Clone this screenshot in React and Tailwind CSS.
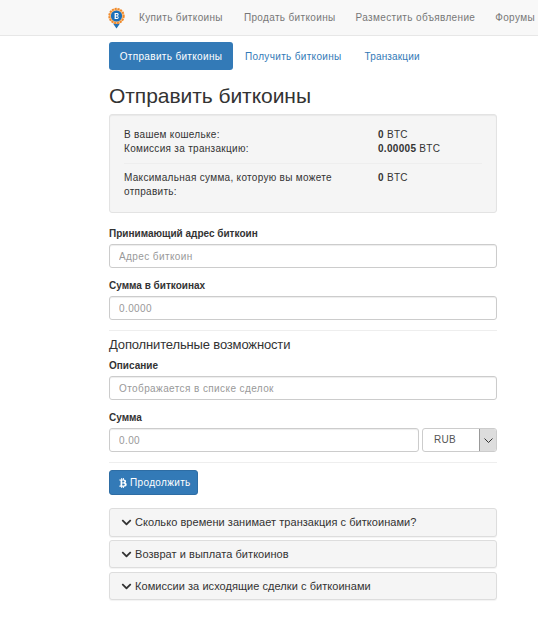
import React from 'react';
import { FaChevronDown, FaBtc } from 'react-icons/fa';

const Logo = () => (
    <svg width="17" height="23" viewBox="0 0 17 23" className="mt-[1px]">
        <path d="M5 16.5 L12 16.5 L8.5 21.5 Z" fill="#1f6fb5" />
        <circle cx="8.5" cy="9" r="7.6" fill="#f9c48c" />
        <circle cx="8.5" cy="9" r="7.2" fill="none" stroke="#ef8a2c" strokeWidth="2" strokeDasharray="2 0.9" />
        <circle cx="8.5" cy="9" r="5.6" fill="#1a6fb8" />
        <path d="M6.6 6 h2.5 a1.5 1.5 0 0 1 .6 2.9 a1.6 1.6 0 0 1 -.4 3.1 H6.6 Z M7.9 7.1 v1.4 h1 a.7 .7 0 0 0 0 -1.4 Z M7.9 9.5 v1.4 h1.2 a.7 .7 0 0 0 0 -1.4 Z" fill="#fff" fillRule="evenodd" />
    </svg>
);

const Field = ({ label, placeholder }) => (
    <div>
        <div className="text-[10px] leading-[12px] font-bold text-[#333] mb-[4px]">{label}</div>
        <input placeholder={placeholder} className="block w-full h-[24px] px-[9px] text-[10px] bg-white border border-[#ccc] rounded-[3px] shadow-[inset_0_1px_1px_rgba(0,0,0,0.075)] placeholder:text-[#999] tracking-[0.4px]" />
    </div>
);

const Panel = ({ title, className }) => (
    <div className={`flex items-center pl-[11px] bg-[#f5f5f5] border border-[#ddd] rounded-[3px] shadow-[0_1px_1px_rgba(0,0,0,0.05)] ${className}`}>
        <FaChevronDown className="text-[#333] text-[11px] mr-[3px]" />
        <span className="text-[11px] text-[#333] tracking-[0.05px]">{title}</span>
    </div>
);

const App = () => {
    return (
        <div className="min-h-[621px] bg-white font-['Liberation_Sans',Arial,sans-serif] text-[#333] overflow-hidden">
            {/* Navbar */}
            <div className="h-[36px] bg-[#f8f8f8] border-b border-[#e7e7e7] flex items-center pl-[108px] whitespace-nowrap text-[10px] text-[#777] tracking-[0.35px] overflow-hidden">
                <Logo />
                <a className="ml-[14px]">Купить биткоины</a>
                <a className="ml-[21px]">Продать биткоины</a>
                <a className="ml-[20px]">Разместить объявление</a>
                <a className="ml-[20px]">Форумы</a>
            </div>

            <div className="ml-[109px] w-[388px]">
                {/* Tabs */}
                <div className="flex items-center mt-[6px] text-[10px] tracking-[0.33px] whitespace-nowrap">
                    <a className="flex items-center justify-center h-[28px] w-[124px] bg-[#337ab7] text-white rounded-[3px]">Отправить биткоины</a>
                    <a className="ml-[12px] text-[#337ab7]">Получить биткоины</a>
                    <a className="ml-[23px] text-[#337ab7] tracking-[0.15px]">Транзакции</a>
                </div>

                <h1 className="mt-[14px] text-[21px] leading-[24px] font-normal text-[#333] tracking-[-0.05px]">Отправить биткоины</h1>

                {/* Wallet summary */}
                <div className="mt-[6px] h-[99px] pt-[13px] px-[14px] bg-[#f5f5f5] border border-[#e3e3e3] rounded-[3px] shadow-[inset_0_1px_1px_rgba(0,0,0,0.05)] text-[10px] leading-[14px] tracking-[0.3px]">
                    <div className="grid grid-cols-[254px_1fr]">
                        <div>В вашем кошельке:</div>
                        <div><b>0</b> BTC</div>
                        <div>Комиссия за транзакцию:</div>
                        <div><b>0.00005</b> BTC</div>
                    </div>
                    <div className="border-t border-[#eee] mt-[7px] mb-[7px]" />
                    <div className="grid grid-cols-[254px_1fr]">
                        <div className="w-[225px]">Максимальная сумма, которую вы можете отправить:</div>
                        <div><b>0</b> BTC</div>
                    </div>
                </div>

                {/* Form */}
                <div className="mt-[15px]">
                    <Field label="Принимающий адрес биткоин" placeholder="Адрес биткоин" />
                </div>
                <div className="mt-[12px]">
                    <Field label="Сумма в биткоинах" placeholder="0.0000" />
                </div>
                <div className="border-t border-[#eee] mt-[10px]" />
                <div className="mt-[6px] mb-[8px] text-[13px] leading-[15px] tracking-[-0.15px]">Дополнительные возможности</div>
                <Field label="Описание" placeholder="Отображается в списке сделок" />
                <div className="mt-[12px]">
                    <div className="text-[10px] leading-[12px] font-bold mb-[4px]">Сумма</div>
                    <div className="flex gap-[3px]">
                        <input placeholder="0.00" className="block w-[310px] h-[24px] px-[9px] text-[10px] bg-white border border-[#ccc] rounded-[3px] shadow-[inset_0_1px_1px_rgba(0,0,0,0.075)] placeholder:text-[#999] tracking-[0.4px]" />
                        <div className="flex-1 flex h-[24px] bg-white border border-[#ccc] rounded-[3px] overflow-hidden">
                            <div className="flex-1 pl-[11px] text-[10px] leading-[22px] text-[#555] tracking-[0.3px]">RUB</div>
                            <div className="w-[17px] flex items-center justify-center bg-[#dddddd] border-l border-[#999]">
                                <svg width="9" height="5" viewBox="0 0 9 5" fill="none" stroke="#333" strokeWidth="1">
                                    <path d="M0.5 0.5 L4.5 4.5 L8.5 0.5" />
                                </svg>
                            </div>
                        </div>
                    </div>
                </div>
                <div className="border-t border-[#eee] mt-[10px]" />

                <button className="mt-[7px] flex items-center h-[25px] w-[89px] pl-[8px] bg-[#337ab7] border border-[#2e6da4] rounded-[3px] text-white text-[10px] tracking-[0.35px]">
                    <FaBtc className="text-[10px] mr-[2px]" />
                    Продолжить
                </button>

                {/* FAQ */}
                <div className="mt-[13px]">
                    <Panel title="Сколько времени занимает транзакция с биткоинами?" className="h-[29px]" />
                    <Panel title="Возврат и выплата биткоинов" className="h-[28px] mt-[3px]" />
                    <Panel title="Комиссии за исходящие сделки с биткоинами" className="h-[28px] mt-[4px]" />
                </div>
            </div>
        </div>
    );
};

export default App;
